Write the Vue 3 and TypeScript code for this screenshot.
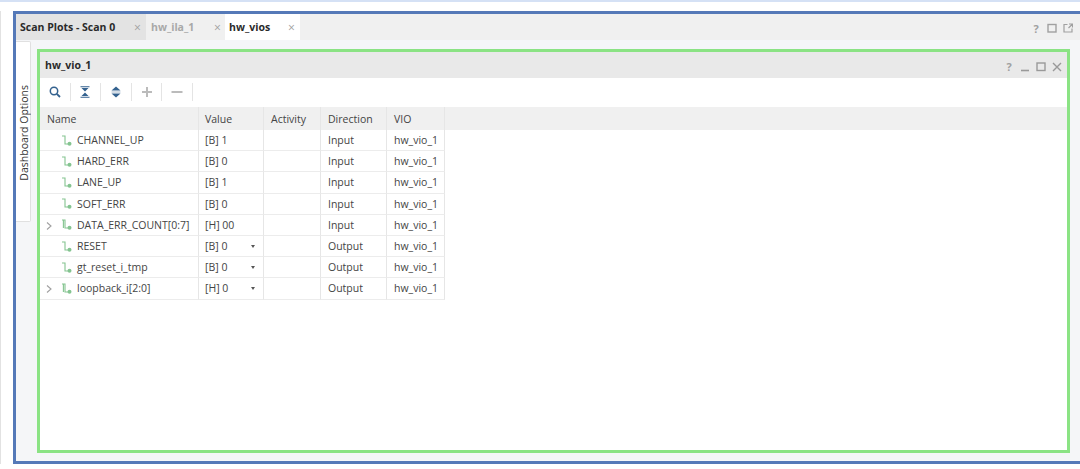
<script setup lang="ts">
interface Row {
  name: string
  value: string
  dir: string
  bus?: boolean
  menu?: boolean
}
const tabs = [
  { label: 'Scan Plots - Scan 0', kind: 'first' },
  { label: 'hw_ila_1', kind: 'dim' },
  { label: 'hw_vios', kind: 'active' },
]
const rows: Row[] = [
  { name: 'CHANNEL_UP', value: '[B] 1', dir: 'Input' },
  { name: 'HARD_ERR', value: '[B] 0', dir: 'Input' },
  { name: 'LANE_UP', value: '[B] 1', dir: 'Input' },
  { name: 'SOFT_ERR', value: '[B] 0', dir: 'Input' },
  { name: 'DATA_ERR_COUNT[0:7]', value: '[H] 00', dir: 'Input', bus: true },
  { name: 'RESET', value: '[B] 0', dir: 'Output', menu: true },
  { name: 'gt_reset_i_tmp', value: '[B] 0', dir: 'Output', menu: true },
  { name: 'loopback_i[2:0]', value: '[H] 0', dir: 'Output', bus: true, menu: true },
]
</script>

<template>
  <div class="page">
    <div class="band"></div>
    <div class="wrap">
      <div class="edge"></div>
      <div class="frame">
        <div class="tabbar">
          <div v-for="t in tabs" :key="t.label" class="tab" :class="t.kind">
            <span class="tab-label">{{ t.label }}</span>
            <span class="tab-x">×</span>
          </div>
          <div class="tab-actions">
            <span class="q">?</span>
            <svg width="10" height="10" viewBox="0 0 10 10"><rect x="1" y="1.5" width="8" height="7.5" fill="none" stroke="#a0a0a0" stroke-width="1.4" /></svg>
            <svg width="10" height="10" viewBox="0 0 10 10"><path d="M4.5 1.5H1v7.5h8V5.5M6 1h3.5v3.5M9.5 1 5.5 5" fill="none" stroke="#a0a0a0" stroke-width="1.2" /></svg>
          </div>
        </div>
        <div class="body">
          <div class="rail">
            <div class="rail-tab"><span>Dashboard Options</span></div>
          </div>
          <div class="green">
            <div class="panel-head">
              <span class="panel-title">hw_vio_1</span>
              <div class="panel-actions">
                <span class="q">?</span>
                <svg width="10" height="10" viewBox="0 0 10 10"><path d="M1 8.5h8" stroke="#999" stroke-width="1.6" /></svg>
                <svg width="10" height="10" viewBox="0 0 10 10"><rect x="1" y="1" width="8" height="7.5" fill="none" stroke="#999" stroke-width="1.4" /></svg>
                <svg width="10" height="10" viewBox="0 0 10 10"><path d="M1 1l8 8M9 1 1 9" stroke="#999" stroke-width="1.4" /></svg>
              </div>
            </div>
            <div class="toolbar">
              <div class="tool">
                <svg width="12" height="12" viewBox="0 0 12 12"><circle cx="5" cy="5" r="3.7" fill="none" stroke="#34628f" stroke-width="1.5" /><path d="M7.8 7.8 11 11" stroke="#34628f" stroke-width="1.8" /></svg>
              </div>
              <div class="tool">
                <svg width="12" height="12" viewBox="0 0 12 12"><path d="M1.5 .8h9M1.5 11.2h9" stroke="#34628f" stroke-width="1.1" /><path d="M2.5 2h7L6 5.4zM2.5 10h7L6 6.6z" fill="#34628f" /></svg>
              </div>
              <div class="tool">
                <svg width="12" height="12" viewBox="0 0 12 12"><path d="M6 .5 10.5 4.5h-9zM6 11.5 1.5 7.5h9z" fill="#34628f" /><path d="M1.5 6h9" stroke="#a9bbcd" stroke-width="1" /></svg>
              </div>
              <div class="tool">
                <svg width="12" height="12" viewBox="0 0 12 12"><path d="M6 1v10M1 6h10" stroke="#bbb" stroke-width="2" /></svg>
              </div>
              <div class="tool">
                <svg width="12" height="12" viewBox="0 0 12 12"><path d="M.5 6h11" stroke="#bbb" stroke-width="2" /></svg>
              </div>
            </div>
            <div class="grid-head">
              <div class="cell c-name">Name</div>
              <div class="cell c-value">Value</div>
              <div class="cell c-act">Activity</div>
              <div class="cell c-dir">Direction</div>
              <div class="cell c-vio">VIO</div>
            </div>
            <div v-for="r in rows" :key="r.name" class="row">
              <div class="cell c-name name">
                <svg v-if="r.bus" class="chev" width="6" height="8" viewBox="0 0 6 8"><path d="M1 .5 5 4 1 7.5" fill="none" stroke="#a0a0a0" stroke-width="1.1" /></svg>
                <svg class="sig" width="10" height="11" viewBox="0 0 10 11">
                  <path d="M0 1h3v8h4" fill="none" stroke="#84c490" stroke-width="1.1" />
                  <path v-if="r.bus" d="M1.4 1v8" fill="none" stroke="#84c490" stroke-width="1.1" />
                  <circle cx="7.5" cy="8.7" r="2" fill="#84c490" />
                </svg>
                <span>{{ r.name }}</span>
              </div>
              <div class="cell c-value val">
                <span>{{ r.value }}</span>
                <span v-if="r.menu" class="caret"></span>
              </div>
              <div class="cell c-act"></div>
              <div class="cell c-dir">{{ r.dir }}</div>
              <div class="cell c-vio">hw_vio_1</div>
            </div>
          </div>
        </div>
      </div>
    </div>
  </div>
</template>

<style>
html, body { margin: 0; background: #fff; }
</style>

<style scoped>
.page {
  width: 1080px;
  height: 469px;
  overflow: hidden;
  background: #fff;
  font-family: "Open Sans", "Noto Sans", sans-serif;
  font-size: 10.5px;
  color: #444;
  box-sizing: border-box;
}
.band { height: 2px; background: #d5e1f5; margin-bottom: 9px; }
.wrap { display: flex; height: 453px; }
.edge { width: 1px; flex: none; background: #e2e2e2; margin-right: 12px; }
.frame {
  flex: 1;
  min-width: 0;
  box-sizing: border-box;
  border-top: 3px solid #5579b8;
  border-left: 3px solid #5579b8;
  border-bottom: 3px solid #5579b8;
  background: #f5f6f8;
  display: flex;
  flex-direction: column;
}
.tabbar {
  height: 26px;
  flex: none;
  display: flex;
  background: #f0f0f0;
}
.tab {
  display: flex;
  align-items: center;
  justify-content: space-between;
  box-sizing: border-box;
  padding: 0 2px 0 4px;
  font-weight: 700;
  color: #2a2a2a;
}
.tab.first { width: 130px; background: #e3e3e3; }
.tab.dim { width: 79px; color: #a8a8a8; padding-left: 5px; padding-right: 1px; background: #f0f0f0; }
.tab.active { width: 75px; background: #fff; padding-left: 4px; }
.tab-x { font-size: 12px; font-weight: 400; color: #a0a0a0; width: 10px; }
.tab-actions {
  margin-left: auto;
  display: flex;
  align-items: center;
  gap: 6px;
  padding: 2px 7px 0 0;
}
.q { font-weight: 700; font-size: 11px; color: #a0a0a0; width: 10px; text-align: center; }
.body { flex: 1; display: flex; min-height: 0; }
.rail {
  width: 21px;
  flex: none;
  padding-top: 1px;
}
.rail-tab {
  width: 15px;
  height: 181px;
  box-sizing: border-box;
  background: #fff;
  border: 1px solid #e0e0e0;
  border-left: none;
  border-radius: 0 2px 2px 0;
  display: flex;
  justify-content: center;
  align-items: flex-start;
  padding: 43px 0 0 1px;
}
.rail-tab span {
  writing-mode: vertical-rl;
  transform: rotate(180deg);
  white-space: nowrap;
  color: #333;
}
.green {
  width: 1033px;
  height: 404px;
  margin-top: 9px;
  box-sizing: border-box;
  border: 3px solid #8be384;
  background: #fff;
  display: flex;
  flex-direction: column;
}
.panel-head {
  height: 26px;
  flex: none;
  display: flex;
  align-items: center;
  justify-content: space-between;
  background: #e9e9e9;
  padding: 0 5px 0 5px;
}
.panel-title { font-weight: 700; color: #2a2a2a; }
.panel-actions { display: flex; align-items: center; gap: 6px; padding-top: 3px; }
.toolbar {
  height: 29px;
  flex: none;
  display: flex;
  align-items: center;
  box-sizing: border-box;
  padding-bottom: 1px;
}
.tool {
  width: 30.6px;
  height: 18px;
  box-sizing: border-box;
  display: flex;
  align-items: center;
  justify-content: center;
  border-right: 1px solid #e4e4e4;
}
.grid-head {
  height: 23px;
  flex: none;
  display: flex;
  background: #f0f0f0;
}
.row {
  height: 21.2px;
  flex: none;
  display: flex;
}
.cell {
  box-sizing: border-box;
  display: flex;
  align-items: center;
  padding-left: 7px;
  border-right: 1px solid #e6e6e6;
  white-space: nowrap;
}
.row .cell { border-bottom: 1px solid #ececec; }
.c-name { width: 159px; }
.c-value { width: 65px; padding-left: 6px; }
.c-act { width: 57px; }
.c-dir { width: 66px; }
.c-vio { width: 58px; }
.name { position: relative; padding-left: 22px; }
.chev { position: absolute; left: 6px; top: 7px; }
.sig { margin-right: 5px; }
.val { justify-content: space-between; padding-right: 8px; }
.caret {
  width: 0;
  height: 0;
  border-left: 2.5px solid transparent;
  border-right: 2.5px solid transparent;
  border-top: 3px solid #555;
}
</style>
